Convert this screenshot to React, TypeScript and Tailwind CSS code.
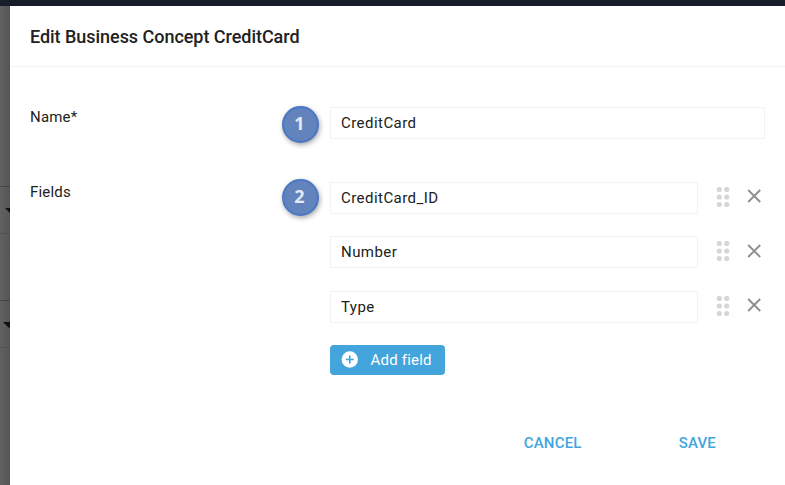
interface FieldRowProps {
  value: string;
}

interface BadgeProps {
  label: string;
  className: string;
}

const fields = ['CreditCard_ID', 'Number', 'Type'];

const Badge = ({ label, className }: BadgeProps) => (
  <span
    className={`absolute flex h-[37px] w-[37px] items-center justify-center rounded-full border-2 border-[#4a77c6] bg-[#6283bb] pr-px pb-[2px] font-['Open_Sans',sans-serif] text-[18px] font-bold tracking-normal text-[#e3e9f5] shadow-[1px_2px_5px_rgba(0,0,0,0.35)] ${className}`}
  >
    {label}
  </span>
);

const DragHandle = () => (
  <svg className="ml-[18px] h-5 w-[14px] shrink-0" viewBox="0 0 14 20" fill="#d6d6d6">
    {[2.5, 10, 17.5].map((y) => (
      <g key={y}>
        <circle cx="3.3" cy={y} r="2.6" />
        <circle cx="10.7" cy={y} r="2.6" />
      </g>
    ))}
  </svg>
);

const FieldRow = ({ value }: FieldRowProps) => (
  <div className="flex h-8 items-start">
    <div className="flex h-8 w-[368px] items-center border border-[#f2f2f2] px-[10px]">{value}</div>
    <div className="mt-[5px] flex items-start">
      <DragHandle />
      <svg
        className="mt-[2.3px] ml-[17px] h-[14px] w-[14px]"
        viewBox="0 0 14 14"
        fill="none"
        stroke="#8f8f8f"
        strokeWidth="1.9"
      >
        <path d="M1.2 1l12 12M13.2 1l-12 12" />
      </svg>
    </div>
  </div>
);

export default function App() {
  return (
    <div className="flex h-[485px] w-[785px] flex-col overflow-hidden bg-[#171e29] pt-[6px] font-['Roboto',sans-serif] text-[15px] tracking-[0.45px] text-[#212121]">
      <div className="flex flex-1">
        {/* Dimmed page behind the dialog */}
        <div className="w-[10px] shrink-0 overflow-hidden bg-gradient-to-r from-[#626262] to-[#555555]">
          <div className="mt-[180px] h-[48px] border-t border-b border-t-[#474747] border-b-[#525252]">
            <svg className="mt-[21px] ml-[5px] h-[6px] w-[12px]" viewBox="0 0 12 6">
              <path d="M0 0h12L6 6z" fill="#111" />
            </svg>
          </div>
          <div className="mt-[66px] h-[48px] border-t border-b border-t-[#474747] border-b-[#525252]">
            <svg className="mt-[21px] ml-[3px] h-[6px] w-[12px]" viewBox="0 0 12 6">
              <path d="M0 0h12L6 6z" fill="#111" />
            </svg>
          </div>
        </div>

        <div className="flex-1 bg-white">
          <header className="flex h-[61px] items-center border-b border-[#f2f2f2] px-5">
            <h1 className="text-[18px] font-medium tracking-[-0.04px]">Edit Business Concept CreditCard</h1>
          </header>

          <div className="pt-10 pr-5 pl-5">
            <div className="relative flex">
              <label className="w-[300px] leading-5 tracking-[0.2px]">Name*</label>
              <Badge label="1" className="top-[-1.5px] left-[251.5px]" />
              <div className="flex h-8 flex-1 items-center border border-[#f2f2f2] px-[10px]">CreditCard</div>
            </div>

            <div className="relative mt-[43px] flex">
              <label className="w-[300px] leading-5 tracking-[0.2px]">Fields</label>
              <Badge label="2" className="top-[-3.5px] left-[251.5px]" />
              <div>
                <div className="space-y-[22.4px]">
                  {fields.map((field) => (
                    <FieldRow key={field} value={field} />
                  ))}
                </div>
                <button className="mt-[22.2px] flex h-[30px] w-[115px] items-center rounded-[4px] bg-[#43a5dc] pl-[11px] tracking-[0.2px] text-white">
                  <svg className="mr-[12.5px] h-[17px] w-[17px]" viewBox="0 0 17 17">
                    <circle cx="8.8" cy="8.5" r="8.2" fill="#fff" />
                    <path d="M8.8 4.5v8M4.8 8.5h8" stroke="#43a5dc" strokeWidth="1.7" />
                  </svg>
                  Add field
                </button>
              </div>
            </div>

            <div className="mt-[58px] flex justify-end pr-[49px] text-[15px] leading-5 font-medium tracking-[0.2px] text-[#43a5dc]">
              <button className="mr-[97px]">CANCEL</button>
              <button>SAVE</button>
            </div>
          </div>
        </div>
      </div>
    </div>
  );
}
